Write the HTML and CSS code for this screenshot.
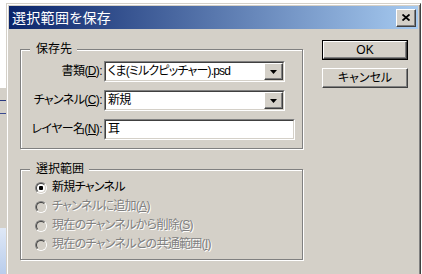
FILE: index.html
```html
<!DOCTYPE html>
<html lang="ja">
<head>
<meta charset="utf-8">
<title>選択範囲を保存</title>
<link rel="stylesheet" href="styles.css">
</head>
<body>
<div class="screen">
  <div class="behind"></div>
  <div class="dialog">
    <div class="titlebar">
      <span class="title">選択範囲を保存</span>
      <span class="close-btn">
        <svg width="8" height="7" viewBox="0 0 8 7"><path d="M0.5 0.5 L7.5 6.5 M7.5 0.5 L0.5 6.5" stroke="#000" stroke-width="1.8" fill="none"/></svg>
      </span>
    </div>
    <div class="content">
      <div class="groups">
        <div class="group group-dest">
          <div class="group-label">保存先</div>
          <div class="form-rows">
            <div class="form-row">
              <span class="field-label">書類(<u>D</u>):</span>
              <div class="combo">
                <div class="combo-inner">
                  <span class="combo-text">くま(ミルクピッチャー).psd</span>
                  <span class="drop-btn"><svg width="7" height="4" viewBox="0 0 7 4"><path d="M0 0 H7 L3.5 4 Z" fill="#000"/></svg></span>
                </div>
              </div>
            </div>
            <div class="form-row">
              <span class="field-label">チャンネル(<u>C</u>):</span>
              <div class="combo">
                <div class="combo-inner">
                  <span class="combo-text">新規</span>
                  <span class="drop-btn"><svg width="7" height="4" viewBox="0 0 7 4"><path d="M0 0 H7 L3.5 4 Z" fill="#000"/></svg></span>
                </div>
              </div>
            </div>
            <div class="form-row">
              <span class="field-label">レイヤー名(<u>N</u>):</span>
              <div class="combo text-field">
                <div class="combo-inner">
                  <span class="combo-text">耳</span>
                </div>
              </div>
            </div>
          </div>
        </div>
        <div class="group group-sel">
          <div class="group-label">選択範囲</div>
          <div class="radio-rows">
            <div class="radio-row">
              <span class="radio checked"><span class="radio-in"><span class="dot"></span></span></span>
              <span class="radio-label">新規チャンネル</span>
            </div>
            <div class="radio-row disabled">
              <span class="radio"><span class="radio-in"></span></span>
              <span class="radio-label">チャンネルに追加(<u>A</u>)</span>
            </div>
            <div class="radio-row disabled">
              <span class="radio"><span class="radio-in"></span></span>
              <span class="radio-label">現在のチャンネルから削除(<u>S</u>)</span>
            </div>
            <div class="radio-row disabled">
              <span class="radio"><span class="radio-in"></span></span>
              <span class="radio-label">現在のチャンネルとの共通範囲(<u>I</u>)</span>
            </div>
          </div>
        </div>
      </div>
      <div class="buttons">
        <div class="btn default"><span class="btn-face">OK</span></div>
        <div class="btn"><span class="btn-face">キャンセル</span></div>
      </div>
    </div>
  </div>
</div>
</body>
</html>
```
FILE: styles.css
```css
html, body {
  margin: 0;
  padding: 0;
}
body {
  width: 422px;
  height: 274px;
  overflow: hidden;
  background: #ffffff;
  font-family: "Liberation Sans", "Noto Sans CJK JP", sans-serif;
  font-feature-settings: "palt";
  font-size: 12px;
  color: #000;
}
.screen {
  display: flex;
  height: 274px;
}
.behind {
  width: 6px;
  flex: none;
  background: linear-gradient(to bottom, #ffffff 0, #ffffff 88px, #d4d0c8 88px, #d4d0c8 100px, #2a3a80 100px, #2a3a80 101px, #d4d0c8 101px, #d4d0c8 113px, #3a4a90 113px, #3a4a90 114px, #d4d0c8 114px, #d4d0c8 228px, #dfe8f6 228px, #b9cdec 274px);
}
.dialog {
  width: 415px;
  flex: none;
  margin-top: 3px;
  box-sizing: border-box;
  background: #d4d0c8;
  border-top: 1px solid #d4d0c8;
  border-left: 1px solid #d4d0c8;
  border-right: 1px solid #404040;
  box-shadow: inset 1px 1px 0 #ffffff, inset -1px 0 0 #808080;
  padding: 2px 2px 0 2px;
  height: 271px;
}
.titlebar {
  height: 23px;
  display: flex;
  align-items: center;
  justify-content: space-between;
  background: linear-gradient(to right, #0a246a, #a6caf0);
  padding: 0 2px 0 3px;
}
.title {
  color: #ffffff;
  font-size: 14px;
  line-height: 18px;
  letter-spacing: 0.3px;
}
.close-btn {
  width: 20px;
  height: 18px;
  box-sizing: border-box;
  display: flex;
  align-items: center;
  justify-content: center;
  background: #d4d0c8;
  border: 1px solid;
  border-color: #ffffff #404040 #404040 #ffffff;
  box-shadow: inset -1px -1px 0 #808080;
}
.content {
  display: flex;
  align-items: flex-start;
  padding-left: 11px;
}
.groups {
  margin-top: 20px;
  width: 283px;
}
.group {
  box-sizing: border-box;
  border: 1px solid #808080;
  box-shadow: inset 1px 1px 0 #ffffff, 1px 1px 0 #ffffff;
}
.group-dest {
  height: 100px;
}
.group-sel {
  height: 91px;
  margin-top: 20px;
}
.group-label {
  width: fit-content;
  margin-top: -8px;
  margin-left: 9px;
  padding: 0 5px 0 6px;
  line-height: 14px;
  background: #d4d0c8;
}
.form-rows {
  margin-top: 5px;
  display: flex;
  flex-direction: column;
  gap: 8px;
}
.form-row {
  display: flex;
  height: 21px;
  align-items: center;
}
.field-label {
  width: 81px;
  text-align: right;
  margin-right: 2px;
  line-height: 21px;
  white-space: nowrap;
  letter-spacing: -0.6px;
}
.combo {
  width: 181px;
  height: 21px;
  box-sizing: border-box;
  border: 1px solid;
  border-color: #808080 #ffffff #ffffff #808080;
}
.combo.text-field {
  width: 191px;
}
.combo-inner {
  height: 100%;
  box-sizing: border-box;
  border: 1px solid;
  border-color: #404040 #d4d0c8 #d4d0c8 #404040;
  background: #ffffff;
  display: flex;
  align-items: center;
}
.combo-text {
  flex: 1;
  padding-left: 2px;
  line-height: 17px;
  white-space: nowrap;
  overflow: hidden;
  letter-spacing: -0.8px;
}
.drop-btn {
  width: 19px;
  height: 100%;
  box-sizing: border-box;
  display: flex;
  align-items: center;
  justify-content: center;
  background: #d4d0c8;
  border: 1px solid;
  border-color: #ffffff #404040 #404040 #ffffff;
  box-shadow: inset -1px -1px 0 #808080;
}
.radio-rows {
  margin-top: 2px;
  display: flex;
  flex-direction: column;
}
.radio-row {
  height: 19px;
  display: flex;
  align-items: center;
  padding-left: 14px;
}
.radio {
  width: 12px;
  height: 12px;
  box-sizing: border-box;
  border-radius: 50%;
  border: 1px solid;
  border-color: #808080 #ffffff #ffffff #808080;
  flex: none;
}
.radio-in {
  display: flex;
  align-items: center;
  justify-content: center;
  width: 10px;
  height: 10px;
  box-sizing: border-box;
  border-radius: 50%;
  border: 1px solid;
  border-color: #404040 #d4d0c8 #d4d0c8 #404040;
  background: #ffffff;
}
.disabled .radio-in {
  background: #d4d0c8;
}
.dot {
  width: 4px;
  height: 4px;
  border-radius: 1px;
  background: #000;
}
.radio-label {
  margin-left: 5px;
  line-height: 19px;
  white-space: nowrap;
  letter-spacing: -0.7px;
}
.disabled .radio-label {
  color: #808080;
  text-shadow: 1px 1px 0 #ffffff;
}
.buttons {
  margin-left: 19px;
  margin-top: 11px;
  display: flex;
  flex-direction: column;
  gap: 8px;
}
.btn {
  width: 86px;
  height: 20px;
  box-sizing: border-box;
  display: flex;
}
.btn-face {
  flex: 1;
  display: flex;
  align-items: center;
  justify-content: center;
  box-sizing: border-box;
  border: 1px solid;
  border-color: #ffffff #404040 #404040 #ffffff;
  box-shadow: inset -1px -1px 0 #808080;
  background: #d4d0c8;
  line-height: 16px;
}
.btn.default {
  border: 1px solid #000000;
}
```
